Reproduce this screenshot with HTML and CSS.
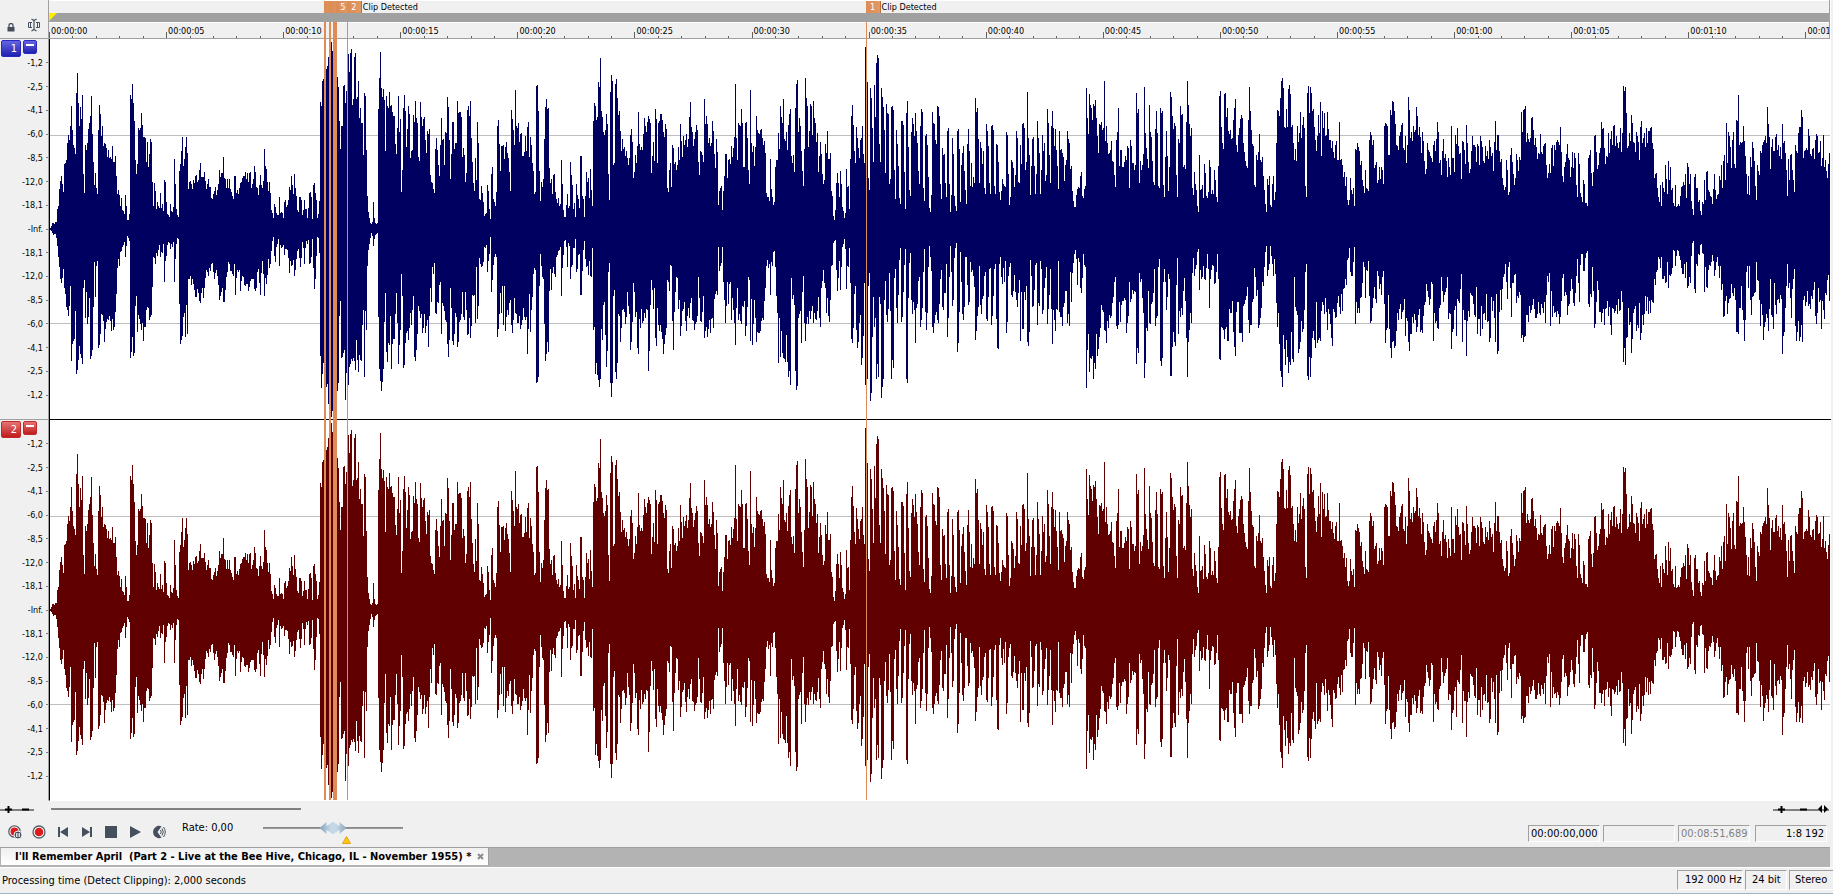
FILE: index.html
```html
<!doctype html>
<html lang="en">
  <head>
    <title>I'll Remember April</title>
    <meta charset="utf-8">
    <meta name="viewport" content="width=device-width, initial-scale=1">
    <link rel="stylesheet" href="styles.css">
  </head>

  <body>
    <main class="editor">
      <div class="corner">
        <svg width="8" height="9" viewBox="0 0 8 9"><path d="M2 4V2.5a2 2 0 0 1 4 0V4" fill="none" stroke="#45505c" stroke-width="1.3"/><path d="M0.5 4h7v4.500h-7z" fill="#45505c"/></svg>
        <svg width="14" height="14" viewBox="0 0 14 14" fill="none" stroke="#45505c"><path d="M5 4.500H1.500v5H5M9 4.500h3.500v5H9M3.500 4v6M10.500 4v6"/><path d="M7 2v10M4.500 1l2.500 1.500L9.500 1M4.500 13L7 11.500 9.500 13" stroke-width="1.200"/></svg>
      </div>
      <div class="timeline">
        <div class="flags" id="flags"></div>
        <div class="overview"><span class="playhead"></span></div>
        <div class="ruler" id="ruler"></div>
      </div>

      <div class="track-head left">
        <div class="track-buttons">
          <button class="channel">1</button>
          <button class="collapse" aria-label="Minimize channel 1"></button>
        </div>
        <div class="scale"></div>
      </div>
      <div class="track">
        <svg class="wave wave-left" viewBox="0 -3 5340 1140" preserveAspectRatio="none"></svg>
      </div>

      <div class="track-head right">
        <div class="track-buttons">
          <button class="channel">2</button>
          <button class="collapse" aria-label="Minimize channel 2"></button>
        </div>
        <div class="scale"></div>
      </div>
      <div class="track">
        <svg class="wave wave-right" viewBox="0 -3 5340 1140" preserveAspectRatio="none"></svg>
      </div>

      <div class="markers" id="markers"></div>
    </main>

    <div class="scroll-row">
      <div class="zoom zoom-level">
        <button aria-label="Zoom level in"><svg width="7" height="7"><path d="M0 3.500h7M3.500 0v7" stroke="#000" stroke-width="2"/></svg></button>
        <button aria-label="Zoom level out"><svg width="7" height="7"><path d="M0 3.500h7" stroke="#000" stroke-width="2"/></svg></button>
      </div>
      <div class="scroll-area"><div class="scroll-thumb"></div></div>
      <div class="zoom zoom-time">
        <button aria-label="Zoom time in"><svg width="7" height="7"><path d="M0 3.500h7M3.500 0v7" stroke="#000" stroke-width="2"/></svg></button>
        <button aria-label="Zoom time out"><svg width="7" height="7"><path d="M0 3.500h7" stroke="#000" stroke-width="2"/></svg></button>
        <button aria-label="Fit"><svg width="10" height="9"><path d="M0 4L4 0v8zM10 4L6 0v8z"/></svg></button>
      </div>
    </div>

    <div class="transport">
      <div class="buttons">
        <button aria-label="Arm for record"><svg width="14" height="14" viewBox="0 0 14 14"><circle cx="6.500" cy="6.500" r="5.700" fill="#fff" stroke="#55606c" stroke-width="1.300"/><circle cx="6.500" cy="6.500" r="4" fill="#e01b1b"/><circle cx="10" cy="10" r="4" fill="#45505c" stroke="#f0f0f0"/><path d="M8.800 8v4M11.200 8v4" stroke="#fff" stroke-width="1.200"/></svg></button>
        <button aria-label="Record"><svg width="14" height="14" viewBox="0 0 14 14"><circle cx="7" cy="7" r="6" fill="#fff" stroke="#55606c" stroke-width="1.300"/><circle cx="7" cy="7" r="4.300" fill="#e01b1b"/></svg></button>
        <button aria-label="Go to start"><svg width="14" height="14" viewBox="0 0 14 14"><path d="M2 2h2v10H2zM12 2v10L4 7z" fill="#45505c"/></svg></button>
        <button aria-label="Go to end"><svg width="14" height="14" viewBox="0 0 14 14"><path d="M10 2h2v10h-2zM2 2v10l8-5z" fill="#45505c"/></svg></button>
        <button aria-label="Stop"><svg width="14" height="14" viewBox="0 0 14 14"><path d="M1 1h12v12H1z" fill="#45505c"/></svg></button>
        <button aria-label="Play"><svg width="14" height="14" viewBox="0 0 14 14"><path d="M2 1v12l11-6z" fill="#45505c"/></svg></button>
        <button aria-label="Scrub"><svg width="14" height="14" viewBox="0 0 14 14"><path d="M9.500 1.200A6.200 6.200 0 1 0 9.500 12.800L5.500 7z" fill="#45505c"/><path d="M8.500 5q1.500 2 0 4M10 3.500q2.500 3.500 0 7M11.500 2q3.500 5 0 10" fill="none" stroke="#45505c"/></svg></button>
      </div>
      <label class="rate" for="rate">Rate: 0,00</label>
      <div class="slider">
        <input type="range" id="rate" min="-20" max="20" value="0">
        <svg class="notch" width="9" height="8"><path d="M4.500 0.500l4 7h-8z" fill="#ffc90e" stroke="#e0a020"/></svg>
      </div>
      <div class="times">
        <output class="field">00:00:00,000</output>
        <output class="field"></output>
        <output class="field dim">00:08:51,689</output>
        <output class="field ratio">1:8 192</output>
      </div>
    </div>

    <nav class="tabs">
      <a class="tab" href="#">I'll Remember April&nbsp; (Part 2 - Live at the Bee Hive, Chicago, IL - November 1955) *
        <svg width="7" height="7"><path d="M1 1l5 5M6 1L1 6" stroke="#8c8c8c" stroke-width="2"/></svg>
      </a>
    </nav>

    <footer class="status">
      <span class="message">Processing time (Detect Clipping): 2,000 seconds</span>
      <span class="cell rate-cell">192 000 Hz</span>
      <span class="cell bits">24 bit</span>
      <span class="cell mode">Stereo</span>
    </footer>

    <script src="wave.js"></script>
  </body>
</html>
```
FILE: styles.css
```css
* {
  box-sizing: border-box;
}
body {
  margin: 0;
  height: 100vh;
  display: flex;
  flex-direction: column;
  overflow: hidden;
  background: #f0f0f0;
  color: #000;
  font-family: "DejaVu Sans Condensed", "Liberation Sans", sans-serif;
  font-size: 11px;
}
button {
  padding: 0;
  border: 0;
  background: none;
  font: inherit;
}
svg {
  display: block;
}

/* editor */
.editor {
  position: relative;
  flex: 1;
  display: grid;
  grid-template-columns: 49px 1fr;
  grid-template-rows: 39px 1fr 1fr;
  margin-right: 2px;
  background: #fff;
  min-height: 0;
}
.corner {
  display: flex;
  align-items: flex-end;
  gap: 12px;
  padding: 0 0 6px 7px;
  background: #f0f0f0;
  border-right: 1px solid #a0a0a0;
  border-bottom: 1px solid #a0a0a0;
}
.timeline {
  position: relative;
  margin-right: 1px;
  border-right: 1px solid #a0a0a0;
  background: #f0f0f0;
  min-width: 0;
}
.flags {
  height: 13px;
  border-top: 1px solid #fff;
}
.flag {
  position: absolute;
  top: 1px;
  height: 12px;
  display: flex;
  gap: 1px;
  line-height: 12px;
  font-size: 9px;
  white-space: nowrap;
}
.flag b {
  width: 15px;
  text-align: center;
  font-weight: normal;
  color: #fff;
  background: linear-gradient(to right, #dc8c54, #e09a66);
  border-right: 1px solid #b96f3c;
}
.overview {
  height: 10px;
  background: #a0a0a0;
  border-bottom: 1px solid #fff;
}
.playhead {
  display: block;
  width: 8px;
  height: 8px;
  background: #ffee00;
  clip-path: polygon(0 0, 100% 0, 0 100%);
}
.ruler {
  display: flex;
  height: 16px;
  overflow: hidden;
  border-bottom: 1px solid #a0a0a0;
}
.second-block {
  position: relative;
  flex: none;
  display: grid;
  grid-template-columns: repeat(5, 1fr);
  align-items: end;
}
.second-block time {
  position: absolute;
  left: 2px;
  top: 2px;
  font-size: 9px;
  line-height: 12px;
}
.second-block i {
  height: 2px;
  border-left: 1px solid #606060;
}
.second-block i:first-of-type {
  height: 6px;
}

/* tracks */
.track-head {
  position: relative;
  background: #f0f0f0;
  border-right: 1px solid #a0a0a0;
  border-bottom: 1px solid #a0a0a0;
  min-height: 0;
}
.track-head.right {
  border-bottom-color: #f0f0f0;
}
.track-buttons {
  position: absolute;
  top: 1px;
  left: 1px;
  display: flex;
  gap: 2px;
}
.channel {
  width: 20px;
  height: 17px;
  padding-right: 3px;
  border-radius: 2px;
  text-align: right;
  color: #fff;
}
.collapse {
  width: 14px;
  height: 14px;
  border-radius: 2px;
}
.collapse::before {
  content: "";
  display: block;
  width: 8px;
  height: 2px;
  margin: 0 auto 4px;
  background: #fff;
}
.left button {
  background: linear-gradient(#6464e0, #2020b4);
  border: 1px solid #2828c0;
}
.right button {
  background: linear-gradient(#e47474, #c01c1c);
  border: 1px solid #c42828;
}
.scale {
  display: flex;
  flex-direction: column;
  height: 100%;
  padding: 12px 0;
  font-size: 9px;
}
.scale span {
  flex: 1;
  display: flex;
  align-items: center;
  justify-content: flex-end;
  gap: 3px;
}
.scale span::after {
  content: "";
  width: 2px;
  height: 1px;
  background: #808080;
}
.track {
  border-left: 1px solid #000;
  border-bottom: 1px solid #000;
  padding-right: 1px;
  min-width: 0;
  min-height: 0;
}
.track:nth-of-type(6) {
  border-bottom-color: #fff;
}
.wave {
  width: 100%;
  height: 100%;
  shape-rendering: crispEdges;
}
.wave rect {
  fill: #bebebe;
}
.wave-left path {
  fill: #000060;
}
.wave-right path {
  fill: #600000;
}
.markers {
  position: absolute;
  top: 22px;
  right: 0;
  bottom: 1px;
  left: 49px;
  pointer-events: none;
}
.marker {
  position: absolute;
  top: 0;
  bottom: 0;
  background: #dc8c54;
}

/* scroll and zoom */
.scroll-row {
  display: flex;
  align-items: center;
  height: 16px;
}
.zoom {
  display: flex;
  align-items: center;
  height: 9px;
  background: linear-gradient(#808080, #808080) 0 4px / 100% 2px no-repeat;
}
.zoom-level {
  width: 34px;
  gap: 10px;
  padding-left: 5px;
}
.zoom-time {
  width: 56px;
  gap: 15px;
  padding-left: 5px;
  margin-right: 4px;
}
.zoom-time button:last-child {
  margin-left: -4px;
}
.scroll-area {
  flex: 1;
  padding-left: 17px;
}
.scroll-thumb {
  width: 250px;
  height: 2px;
  background: #808080;
}

/* transport */
.transport {
  display: flex;
  align-items: flex-start;
  height: 30px;
}
.buttons {
  display: flex;
  gap: 10px;
  padding: 8px 0 0 8px;
}
.rate {
  width: 81px;
  margin: 4px 0 0 16px;
  line-height: 14px;
}
.slider {
  position: relative;
  width: 140px;
}
.slider input {
  appearance: none;
  display: block;
  width: 100%;
  height: 12px;
  margin: 5px 0 0;
  background: linear-gradient(#808080, #a0a0a0) 0 5px / 100% 2px no-repeat;
}
.slider input::-webkit-slider-thumb {
  appearance: none;
  width: 27px;
  height: 12px;
  background: linear-gradient(90deg, #88a4b8, #c4d8e8 40%, #c4d8e8 60%, #88a4b8);
  clip-path: polygon(0 50%, 26% 0, 26% 35%, 48% 0, 52% 0, 74% 35%, 74% 0, 100% 50%, 74% 100%, 74% 65%, 52% 100%, 48% 100%, 26% 65%, 26% 100%);
}
.notch {
  position: absolute;
  left: 79px;
  top: 19px;
}
.times {
  display: flex;
  gap: 3px;
  margin: 8px 6px 0 auto;
}
.field {
  width: 72px;
  height: 17px;
  padding-left: 2px;
  border: 1px solid;
  border-color: #a0a0a0 #fff #fff #a0a0a0;
  line-height: 16px;
  white-space: nowrap;
}
.dim {
  color: #808080;
}
.ratio {
  margin-left: 2px;
  padding-right: 2px;
  text-align: right;
}

/* tabs */
.tabs {
  display: flex;
  height: 20px;
  margin-right: 3px;
  padding-left: 1px;
  background: #b3b3b3;
  border-top: 1px solid #a0a0a0;
}
.tab {
  display: flex;
  align-items: center;
  gap: 6px;
  height: 17px;
  padding: 0 4px 0 14px;
  background: linear-gradient(#f0f0f0, #fff);
  border-right: 1px solid #a0a0a0;
  color: #000;
  font-weight: bold;
  text-decoration: none;
  white-space: nowrap;
}

/* status bar */
.status {
  display: flex;
  align-items: center;
  gap: 2px;
  height: 27px;
  padding-bottom: 1px;
  border-top: 1px solid #fff;
  border-bottom: 1px solid #a0b4c4;
}
.message {
  flex: 1;
  padding-left: 2px;
}
.cell {
  height: 20px;
  padding: 0 5px 0 7px;
  border: 1px solid;
  border-color: #a0a0a0 #fff #fff #a0a0a0;
  line-height: 18px;
  white-space: nowrap;
}
.rate-cell {
  width: 66px;
}
.bits {
  width: 42px;
  padding-left: 6px;
}
.mode {
  width: 44px;
  padding: 0 0 0 5px;
  border-right: 0;
}
```
FILE: wave.js
```js
// Envelope of the recording, one chunk per 1350 units of width.
// Each line is "x: y y y ..." with one value every 3 units, the track is 1140 high.
const STEP = 3;
const CHUNK = 1350;
const ORIGIN = 30;
const WIDTH = 5340;
const SECONDS = 76;

const tops = [`
30: 565 558 549 549 552 546 546 507 498 447
60: 423 408 432 456 372 369 360 309 285 300
90: 258 198 270 315 324 342 159 99 189 258
120: 201 237 165 402 459 315 330 309 267 249
150: 228 168 282 366 435 399 444 462 270 195
180: 222 288 258 318 309 312 324 351 330 354
210: 351 357 318 366 366 348 408 462 450 465
240: 498 474 510 513 522 465 498 540 540 522
270: 165 177 132 189 243 360 402 372 264 270
300: 264 219 255 291 291 294 366 306 381 342
330: 297 306 426 498 429 453 507 486 498 504
360: 459 504 492 513 420 426 486 522 525 531
390: 492 513 516 501 357 432 507 525 531 393
420: 372 333 291 378 357 321 291 339 447 426
450: 423 432 447 420 429 408 405 426 420 390
480: 369 411 411 411 396 423 447 432 417 441
510: 441 474 477 462 453 441 465 450 432 390
540: 411 399 399 351 414 417 444 417 444 417
570: 447 456 468 477 408 408 459 450 462 444
600: 429 426 414 408 408 396 417 399 426 399
630: 396 444 432 417 378 396 441 444 465 435
660: 405 435 444 423 327 378 387 426 453 426
690: 459 510 519 534 492 501 519 525 525 471
720: 519 516 519 534 486 480 501 495 480 441
750: 450 408 435 462 402 444 468 510 516 471
780: 471 480 525 510 480 507 507 534 504 459
810: 456 471 537 435 429 459 480 534 522 483
840: 186 198 123 117 100 100 87 78 51 51
870: 40 6 33 60 60 60 60 111 141 243
900: 327 258 258 138 135 189 153 120 42 96
930: 39 27 195 177 51 39 177 171 123 234
960: 204 249 249 345 159 168 330 468 516 534
990: 549 552 546 486 534 549 552 549 207 114
1020: 36 144 171 147 180 333 168 198 204 156
1050: 198 195 216 228 228 312 342 264 168 276
1080: 237 456 390 204 165 213 321 267 198 222
1110: 354 333 330 225 246 183 234 249 351 363
1140: 186 231 258 237 231 300 339 273 282 267
1170: 405 426 429 447 459 327 294 330 375 408
1200: 315 234 300 297 375 276 279 171 201 300
1230: 417 342 246 246 327 309 309 183 219 216
1260: 216 231 351 324 345 426 399 210 198 228
1290: 183 294 366 429 453 354 420 246 309 477
1320: 480 438 459 486 528 522 519 435 453 507
`, `
0: 537 402 381 477 486 498 456 258 240 312
30: 393 318 318 315 357 321 306 339 354 396
60: 453 210 237 270 315 150 258 264 249 306
90: 282 279 348 348 336 288 333 261 246 351
120: 291 315 369 393 462 456 138 135 213 393
150: 483 426 441 417 297 201 177 207 204 384
180: 429 417 462 405 402 456 477 489 474 498
210: 492 360 432 510 531 531 495 462 504 498
240: 366 405 435 507 489 531 432 465 477 504
270: 348 348 468 477 531 468 396 426 414 474
300: 387 450 498 243 189 198 240 231 126 141
330: 54 213 231 276 285 270 222 252 402 480
360: 156 105 123 375 369 132 117 174 225 213
390: 273 333 297 327 321 348 333 354 375 354
420: 285 267 306 414 396 345 369 318 216 312
450: 330 321 330 282 234 258 276 246 228 237
480: 249 399 348 306 363 207 237 369 249 243
510: 222 222 240 276 291 252 267 444 456 390
540: 369 441 315 324 372 366 390 375 321 360
570: 252 303 351 288 315 300 282 321 297 231
600: 186 261 276 318 297 276 255 270 366 405
630: 333 336 345 366 177 252 228 252 309 294
660: 318 309 243 273 342 384 297 336 495 453
690: 444 438 510 453 408 342 342 414 360 357
720: 372 318 351 324 291 132 294 360 249 255
750: 258 207 249 381 381 249 246 294 390 432
780: 150 309 336 318 378 321 228 270 279 282
810: 270 267 294 315 303 339 459 471 471 483
840: 357 447 471 495 486 381 360 360 279 327
870: 198 231 249 177 297 303 276 330 255 222
900: 207 348 369 345 396 204 132 120 276 234
930: 258 333 393 438 327 114 174 198 321 273
960: 192 198 285 183 234 249 306 279 396 348
990: 306 342 402 432 420 312 339 273 357 357
1020: 339 453 468 528 540 510 429 399 429 471
1050: 393 432 501 513 534 519 387 441 438 507
1080: 357 228 195 255 333 369 261 294 324 354
1110: 300 294 258 342 369 21 21 126 414 450
1140: 144 174 264 366 135 231 69 45 54 312
1170: 366 144 171 201 270 399 192 219 222 432
1200: 417 201 198 210 390 477 270 312 378 474
1230: 492 243 243 255 396 507 219 183 321 450
1260: 468 276 234 252 288 219 273 309 393 432
1290: 258 207 216 444 483 288 282 315 411 504
1320: 516 465 216 249 252 300 312 198 201 228
`, `
0: 432 477 324 345 342 429 471 273 264 432
30: 516 465 294 342 468 498 513 273 267 327
60: 486 375 339 318 393 450 492 312 267 333
90: 438 369 441 411 429 174 216 204 297 429
120: 306 324 372 333 444 462 252 273 318 429
150: 462 258 255 270 438 462 312 315 366 456
180: 480 453 417 432 438 441 276 285 402 495
210: 471 360 366 384 441 405 273 294 426 429
240: 315 372 252 249 264 390 366 156 294 345
270: 465 378 297 291 378 462 402 243 294 339
300: 462 390 285 333 309 423 405 207 249 345
330: 429 258 213 264 318 267 330 378 447 273
360: 330 327 339 351 423 375 360 273 297 309
390: 387 378 453 483 501 501 465 447 441 444
420: 408 396 468 474 447 438 144 234 282 162
450: 195 204 240 192 198 180 234 288 339 252
480: 255 246 270 264 123 303 258 309 342 339
510: 330 303 363 366 405 441 300 276 204 378
540: 330 330 381 381 366 348 360 318 324 444
570: 300 318 369 369 390 375 159 219 207 429
600: 363 390 375 342 141 279 324 357 384 195
630: 276 291 363 426 435 267 213 279 438 444
660: 204 219 213 435 471 351 273 348 453 381
690: 156 171 228 267 249 258 405 471 297 309
720: 198 225 222 381 375 387 246 123 195 252
750: 288 264 444 465 396 432 450 498 516 345
780: 450 447 435 474 372 399 468 474 456 360
810: 381 462 450 462 390 420 471 486 378 168
840: 153 261 309 327 162 159 231 204 273 282
870: 270 297 294 240 204 177 315 336 285 264
900: 237 225 234 309 336 363 378 384 240 141
930: 213 270 312 318 435 441 345 360 336 282
960: 360 366 351 408 450 492 516 417 435 408
990: 495 501 432 408 480 456 309 210 213 228
1020: 174 123 114 144 261 264 207 261 147 135
1050: 162 261 255 309 360 327 363 258 306 279
1080: 216 294 255 231 264 438 471 159 138 219
1110: 141 159 213 207 261 300 333 288 225 279
1140: 186 348 213 264 219 288 285 216 267 300
1170: 300 324 303 336 354 315 303 360 360 246
1200: 360 357 375 411 396 438 411 480 495 480
1230: 414 450 462 444 498 327 330 309 321 333
1260: 375 363 420 438 459 390 444 447 453 300
1290: 276 285 315 300 384 375 366 429 420 381
1320: 417 381 390 432 258 249 252 258 345 345
`, `
0: 210 225 183 186 213 252 315 318 330 288
30: 276 255 249 324 330 288 369 315 171 210
60: 294 276 303 258 276 270 201 228 285 261
90: 291 339 276 303 363 402 387 309 330 336
120: 348 354 366 315 303 333 297 246 276 369
150: 360 405 333 297 354 342 363 411 354 381
180: 405 258 354 354 396 285 312 264 318 342
210: 339 417 303 306 330 372 255 309 366 399
240: 387 333 288 315 315 321 366 312 318 375
270: 288 303 321 363 369 318 348 333 357 300
300: 321 348 339 393 306 243 330 285 285 333
330: 366 357 414 435 450 441 360 390 465 456
360: 345 324 366 402 435 414 342 360 393 351
390: 360 216 276 210 207 198 306 279 297 306
420: 294 234 231 270 315 294 321 357 339 342
450: 282 336 342 318 312 309 375 414 399 372
480: 399 324 315 378 315 330 306 300 306 315
510: 261 336 408 426 381 366 342 312 354 360
540: 411 381 336 384 339 354 435 471 339 372
570: 459 471 486 420 432 489 489 498 354 345
600: 330 399 438 396 288 285 336 387 375 339
630: 324 246 267 264 324 372 348 351 279 339
660: 297 273 315 258 255 318 288 309 324 306
690: 264 336 279 138 153 141 219 324 318 279
720: 303 225 249 306 309 336 276 288 306 360
750: 261 243 309 294 279 321 264 309 273 273
780: 264 261 309 327 414 402 399 444 471 486
810: 435 498 426 444 456 375 417 462 363 420
840: 381 450 444 489 498 435 501 498 492 498
870: 468 441 438 426 435 402 474 369 381 432
900: 402 483 507 525 411 402 444 444 486 480
930: 513 525 486 492 420 480 396 393 450 456
960: 468 471 492 447 402 450 477 465 462 408
990: 420 375 444 363 345 420 249 369 276 288
1020: 321 384 300 276 372 384 240 243 165 315
1050: 306 309 306 258 303 348 402 462 408 465
1080: 351 381 306 324 363 438 480 375 393 405
1110: 333 339 315 306 300 288 309 201 252 291
1140: 387 321 297 333 333 291 282 330 315 348
1170: 321 357 252 309 303 339 390 468 357 420
1200: 345 342 390 420 456 315 333 339 279 261
1230: 261 210 231 354 333 330 324 330 267 288
1260: 342 348 327 324 357 300 282 288 339 336
1290: 303 378 354 285 381 360 393 414 372 339
`];

const bottoms = [`
30: 570 574 580 584 582 582 594 618 651 681
60: 717 729 714 687 744 762 801 810 828 798
90: 738 963 912 903 897 813 1002 990 960 918
120: 942 954 972 744 720 834 756 852 831 774
150: 957 948 930 801 666 771 678 663 924 915
180: 882 822 825 843 906 867 846 837 840 828
210: 843 873 837 870 861 816 762 684 657 678
240: 636 633 621 615 606 651 618 588 594 603
270: 954 936 891 948 939 798 768 876 825 837
300: 852 870 849 903 861 861 810 801 804 840
330: 831 825 741 651 654 672 639 648 630 615
360: 651 636 639 612 726 663 648 615 606 609
390: 627 612 621 606 726 657 612 594 597 792
420: 912 900 888 831 819 891 795 882 717 717
450: 708 735 717 732 750 771 771 747 759 783
480: 789 759 744 774 744 714 690 696 708 684
510: 693 672 669 696 717 699 690 708 735 780
540: 768 756 744 786 786 750 711 696 666 672
570: 693 693 702 708 672 765 714 690 696 690
600: 753 723 708 711 735 738 732 732 753 741
630: 723 717 717 717 747 753 744 696 687 729
660: 765 699 663 702 768 714 732 705 657 684
690: 672 633 603 591 648 666 621 612 597 678
720: 615 624 621 615 645 627 627 630 654 699
750: 663 678 675 660 708 690 657 633 627 654
780: 681 654 606 624 672 624 603 612 600 672
810: 669 651 597 684 747 717 648 591 594 639
840: 948 1044 1002 969 969 969 1041 1032 1092 1092
870: 1110 1131 1113 1100 1100 1100 1100 1053 1029 828
900: 783 954 951 939 930 1080 999 990 1035 981
930: 972 957 963 954 963 990 900 960 996 945
960: 960 963 855 810 1011 813 870 678 630 612
990: 594 579 588 618 597 585 582 579 831 987
1020: 1023 1053 1026 987 846 759 936 966 909 915
1050: 828 987 912 897 897 822 759 849 972 915
1080: 870 702 768 984 975 909 879 873 900 864
1110: 819 855 810 768 951 963 930 882 798 813
1140: 834 822 879 864 822 879 858 840 921 828
1170: 744 786 681 702 669 819 822 786 789 735
1200: 726 882 789 798 813 840 846 912 951 900
1230: 744 804 903 915 882 819 831 921 906 846
1260: 840 822 756 831 840 756 810 885 882 834
1290: 894 858 765 768 765 849 681 837 798 654
1320: 672 681 678 666 621 624 615 696 663 642
`, `
0: 591 756 720 675 651 642 651 891 867 822
30: 759 819 738 855 738 873 831 810 825 789
60: 780 855 879 840 774 819 822 849 849 828
90: 867 855 840 804 831 840 831 942 867 762
120: 876 810 771 702 684 690 1029 1026 1011 738
150: 642 678 711 717 852 963 942 906 936 753
180: 687 750 699 681 702 711 651 645 633 630
210: 621 768 684 645 603 600 621 681 609 618
240: 717 681 675 624 624 597 696 687 645 642
270: 765 765 693 630 603 657 681 678 705 663
300: 708 711 624 870 861 1002 969 1005 1020 1041
330: 1017 867 900 795 786 885 981 933 696 669
360: 1029 1071 1029 768 750 996 1017 969 822 828
390: 906 864 810 807 816 852 831 756 798 822
420: 930 906 846 729 756 831 816 924 942 837
450: 864 807 849 843 819 834 807 810 993 933
480: 795 720 750 807 744 894 918 804 855 873
510: 855 876 897 942 912 885 864 720 726 753
540: 675 678 843 930 816 756 711 714 807 780
570: 888 858 813 807 786 843 873 828 804 834
600: 789 774 840 843 870 852 846 828 711 774
630: 843 846 816 768 894 873 861 891 867 840
660: 879 837 834 864 777 762 753 765 621 693
690: 678 669 621 726 780 849 798 726 792 732
720: 726 840 774 810 849 915 804 744 840 822
750: 843 852 798 801 783 888 858 801 711 720
780: 903 777 915 852 780 834 906 876 879 879
810: 873 843 834 840 783 744 678 660 684 672
840: 765 666 678 636 633 681 768 819 969 834
870: 951 873 939 954 957 966 885 966 1011 993
900: 1035 714 777 765 795 993 1050 1038 834 822
930: 813 909 756 708 849 903 852 831 852 813
960: 837 813 798 849 819 837 840 813 771 834
990: 861 744 723 690 729 744 819 774 828 846
1020: 780 678 675 609 603 600 690 753 714 663
1050: 750 681 621 612 597 627 747 678 681 624
1080: 729 897 909 864 762 738 870 924 906 849
1110: 825 975 954 888 729 1035 1017 1017 738 699
1140: 1083 1059 891 771 861 834 1017 972 1011 771
1170: 792 1074 1041 1017 780 723 825 846 807 699
1200: 813 1017 960 984 714 687 804 849 765 660
1230: 624 846 831 756 675 627 1017 1029 774 669
1260: 639 780 822 786 810 909 804 792 723 711
1290: 861 840 804 696 627 816 870 819 681 618
1320: 651 693 861 879 849 825 816 840 849 792
`, `
0: 717 690 801 810 759 759 672 891 834 711
30: 618 696 798 780 654 624 609 936 909 816
60: 636 726 822 840 801 651 651 735 795 786
90: 666 696 690 708 741 900 873 828 801 678
120: 795 822 777 768 708 696 837 843 771 687
150: 684 855 828 768 687 672 837 924 927 672
180: 651 711 732 684 726 663 879 846 708 681
210: 669 765 771 753 705 756 780 801 759 720
240: 903 756 867 867 756 780 738 906 918 876
270: 660 708 801 798 750 675 669 855 789 798
300: 663 687 822 810 744 714 681 852 807 765
330: 687 807 912 810 840 873 807 810 663 816
360: 831 831 858 801 789 753 753 849 822 858
390: 696 786 699 669 642 630 657 735 654 666
420: 744 759 714 642 675 681 1044 930 882 996
450: 954 957 948 1017 969 987 882 948 927 891
480: 864 795 810 816 870 873 909 843 864 825
510: 834 828 789 771 726 711 858 867 855 786
540: 846 795 783 783 774 780 879 849 828 726
570: 786 777 750 762 753 756 972 924 939 699
600: 726 717 774 819 1014 969 864 873 753 849
630: 852 792 786 759 687 858 834 828 681 657
660: 963 978 954 726 687 726 810 771 702 717
690: 1008 1008 921 876 906 918 735 654 882 813
720: 831 804 825 753 714 783 894 1011 906 870
750: 819 849 699 654 708 687 675 636 627 750
780: 690 717 711 678 717 720 684 642 687 804
810: 717 690 675 678 732 729 696 642 717 957
840: 960 861 864 870 897 867 861 903 903 807
870: 819 819 783 876 921 948 816 786 786 879
900: 879 879 906 798 792 780 768 741 840 879
930: 855 855 786 777 684 711 768 750 864 855
960: 834 804 726 738 681 636 618 708 690 672
990: 618 648 672 708 657 702 789 861 819 912
1020: 993 1011 1041 885 927 975 900 951 999 966
1050: 975 876 957 966 711 801 813 825 939 927
1080: 906 843 876 867 810 696 672 1008 1020 951
1110: 1011 954 894 873 900 924 786 909 900 894
1140: 903 813 786 795 822 774 816 870 807 822
1170: 852 894 918 807 816 834 831 789 768 801
1200: 822 762 813 747 744 717 735 660 654 624
1230: 696 708 708 666 621 852 786 819 804 819
1260: 774 771 729 666 681 774 690 693 663 768
1290: 849 843 804 774 741 777 789 693 708 747
1320: 732 765 711 693 792 909 870 864 765 867
`, `
0: 924 954 906 903 924 918 873 819 840 807
30: 792 837 816 810 777 888 834 843 906 933
60: 882 882 831 849 822 840 876 861 825 807
90: 876 870 879 828 795 786 732 753 771 795
120: 777 726 732 903 819 849 843 864 867 804
150: 795 711 753 786 765 756 744 711 837 819
180: 822 927 876 867 810 798 888 777 783 789
210: 747 702 906 810 840 840 948 843 813 831
240: 759 765 768 792 825 831 741 882 837 837
270: 888 798 867 822 819 840 762 846 843 906
300: 894 771 813 783 834 906 762 942 933 816
330: 750 810 747 711 702 672 726 777 681 666
360: 744 831 729 729 705 702 789 768 774 756
390: 765 894 885 906 891 888 825 825 846 798
420: 819 810 795 777 807 834 834 822 786 819
450: 825 792 804 819 786 849 765 708 726 699
480: 858 753 831 798 819 816 831 813 822 852
510: 831 783 714 702 768 756 765 825 798 792
540: 753 717 747 789 798 759 708 657 729 786
570: 675 642 642 693 693 654 639 633 792 801
600: 762 771 681 753 864 852 786 723 750 816
630: 816 846 819 807 855 807 804 783 828 801
660: 855 885 804 807 819 813 795 822 777 813
690: 810 753 786 966 924 975 894 891 804 855
720: 846 939 897 819 807 798 873 855 864 789
750: 900 879 825 855 822 768 813 771 822 783
780: 819 780 786 789 717 735 696 690 651 657
810: 684 651 717 717 708 729 726 666 744 705
840: 708 702 684 630 633 678 648 630 633 648
870: 660 684 702 702 672 714 666 744 738 711
900: 729 648 609 603 747 759 672 678 642 645
930: 615 612 639 642 756 681 741 744 690 675
960: 678 666 645 663 708 690 666 651 678 714
990: 678 750 732 831 828 783 768 822 789 777
1020: 774 732 759 768 744 780 876 876 882 804
1050: 804 738 810 840 903 840 696 678 744 678
1080: 780 825 771 768 759 756 666 720 723 780
1110: 858 792 825 900 861 846 822 834 873 807
1140: 717 825 831 867 729 795 822 780 777 789
1170: 765 777 942 888 876 804 738 672 744 729
1200: 774 834 747 717 687 858 903 876 843 903
1230: 891 855 906 780 768 798 786 753 798 792
1260: 807 768 777 750 726 828 852 819 744 786
1290: 780 867 783 810 837 759 765 720 705 783
`];

function readEnvelope(chunks) {
  const points = [];
  chunks.forEach((chunk, n) => {
    chunk.trim().split('\n').forEach(line => {
      const [start, values] = line.split(':');
      values.trim().split(' ').forEach((y, i) => {
        points.push([n * CHUNK - ORIGIN + Number(start) + i * STEP, Number(y)]);
      });
    });
  });
  return points;
}

function wavePath() {
  let d = 'M0 568';
  readEnvelope(tops).forEach(([x, y]) => { d += `H${x}V${y}`; });
  d += `H${WIDTH}V568`;
  readEnvelope(bottoms).reverse().forEach(([x, y]) => { d += `V${y}H${x}`; });
  return d + 'Z';
}

const path = wavePath();
document.querySelectorAll('.wave').forEach(svg => {
  svg.innerHTML = `<rect x="0" y="285" width="${WIDTH}" height="3"/><rect x="0" y="849" width="${WIDTH}" height="3"/><path d="${path}"/>`;
});

// dB scale
const levels = ['-1,2', '-2,5', '-4,1', '-6,0', '-8,5', '-12,0', '-18,1'];
const labels = [...levels, '-Inf.', ...levels.slice().reverse()];
document.querySelectorAll('.scale').forEach(scale => {
  scale.innerHTML = labels.map(l => `<span>${l}</span>`).join('');
});

// time ruler, one block every 5 seconds
const ruler = document.getElementById('ruler');
for (let t = 0; t < SECONDS; t += 5) {
  const min = String(Math.floor(t / 60)).padStart(2, '0');
  const sec = String(t % 60).padStart(2, '0');
  ruler.innerHTML += `<div class="second-block" style="width:${500 / SECONDS}%"><time>00:${min}:${sec}</time><i></i><i></i><i></i><i></i><i></i></div>`;
}

// clipping markers
const flags = [
  { time: 11.735, no: '' },
  { time: 11.949, no: '' },
  { time: 12.247, no: '5' },
  { time: 12.717, no: '2', text: 'Clip Detected' },
  { time: 34.864, no: '1', text: 'Clip Detected' }
];
document.getElementById('flags').innerHTML = flags.map(f =>
  `<div class="flag" style="left:${f.time / SECONDS * 100}%"><b>${f.no}</b>${f.text || ''}</div>`).join('');

const markers = [[11.735, 2], [11.949, 2], [12.119, 4], [12.717, 1], [34.864, 1]];
document.getElementById('markers').innerHTML = markers.map(([time, width]) =>
  `<div class="marker" style="left:${time / SECONDS * 100}%;width:${width}px"></div>`).join('');
```
